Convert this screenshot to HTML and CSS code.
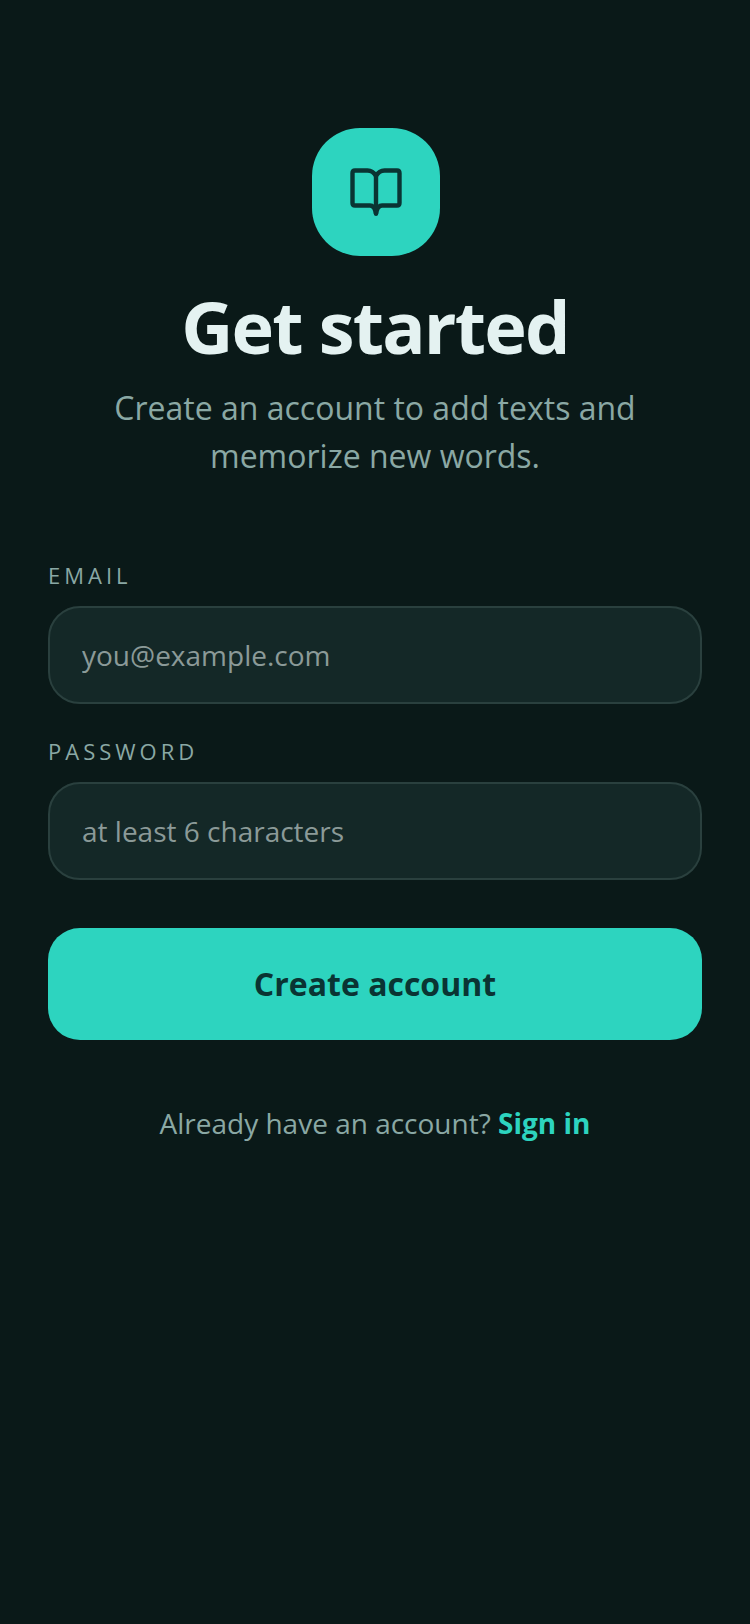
FILE: index.html
```html
<!DOCTYPE html>
<html lang="en">
<head>
    <meta charset="UTF-8">
    <meta name="viewport" content="width=device-width, initial-scale=1.0">
    <title>Get started</title>
    <link rel="stylesheet" href="styles.css">
</head>
<body>

    <div class="container">
        <div class="logo">
            <svg class="logo-icon" viewBox="0 0 56 56" fill="none" stroke="currentColor" stroke-width="4.4" stroke-linecap="round" stroke-linejoin="round">
                <path d="M28 12C26 8.500 23 6.500 19.500 6.500H7C5.500 6.500 4.500 7.500 4.500 9V39C4.500 40.500 5.500 41.500 7 41.500H22C25 41.500 27 44 28 49.500C29 44 31 41.500 34 41.500H49C50.500 41.500 51.500 40.500 51.500 39V9C51.500 7.500 50.500 6.500 49 6.500H36.500C33 6.500 30 8.500 28 12Z"/>
                <path d="M28 12V49.500"/>
            </svg>
        </div>
        <h1>Get started</h1>
        <p class="subtitle">Create an account to add texts and memorize new words.</p>

        <form class="signup-form">
            <div class="form-group">
                <label for="email">EMAIL</label>
                <input type="email" id="email" name="email" placeholder="you@example.com">
            </div>
            <div class="form-group">
                <label for="password">PASSWORD</label>
                <input type="password" id="password" name="password" placeholder="at least 6 characters">
            </div>
            <button type="button" class="submit-btn">Create account</button>
        </form>

        <p class="signin">Already have an account? <a href="#">Sign in</a></p>
    </div>

</body>
</html>
```

FILE: styles.css
```css
* {
    box-sizing: border-box;
}
body {
    font-family: "Open Sans", sans-serif;
    margin: 0;
    padding: 0;
    min-height: 1624px;
    background-color: #0a1918;
}
.container {
    display: flex;
    flex-direction: column;
    align-items: center;
    padding: 128px 48px 0;
}
.logo {
    display: flex;
    align-items: center;
    justify-content: center;
    width: 128px;
    height: 128px;
    margin-left: 2px;
    border-radius: 48px;
    background-color: #2dd4bf;
    color: #0a3433;
}
.logo-icon {
    width: 56px;
    height: 56px;
}
h1 {
    margin: 26px 0 0;
    font-size: 72px;
    line-height: 88px;
    font-weight: 700;
    letter-spacing: -1.8px;
    color: #e4f2f1;
}
.subtitle {
    margin: 14px 0 0;
    width: 560px;
    font-size: 32px;
    line-height: 48px;
    text-align: center;
    color: #8aa8a4;
}
.signup-form {
    width: 100%;
    margin-top: 80px;
}
.form-group {
    margin-bottom: 32px;
}
.form-group label {
    display: block;
    margin-bottom: 16px;
    font-size: 22px;
    line-height: 30px;
    letter-spacing: 4px;
    color: #8aa8a4;
}
.form-group input {
    display: block;
    width: 100%;
    height: 98px;
    padding: 0 32px;
    font-family: inherit;
    font-size: 28px;
    color: #e4f2f1;
    background-color: #142827;
    border: 2px solid #2a403e;
    border-radius: 32px;
    outline: none;
}
.form-group input::placeholder {
    color: #8b9a98;
    opacity: 1;
}
.submit-btn {
    display: block;
    width: 100%;
    height: 112px;
    margin-top: 48px;
    padding-bottom: 2px;
    font-family: inherit;
    font-size: 32px;
    font-weight: 700;
    color: #0a3433;
    background-color: #2dd4bf;
    border: none;
    border-radius: 32px;
}
.signin {
    margin: 63px 0 0;
    font-size: 28px;
    line-height: 40px;
    color: #8aa8a4;
}
.signin a {
    font-weight: 700;
    color: #2dd4bf;
    text-decoration: none;
}
```
